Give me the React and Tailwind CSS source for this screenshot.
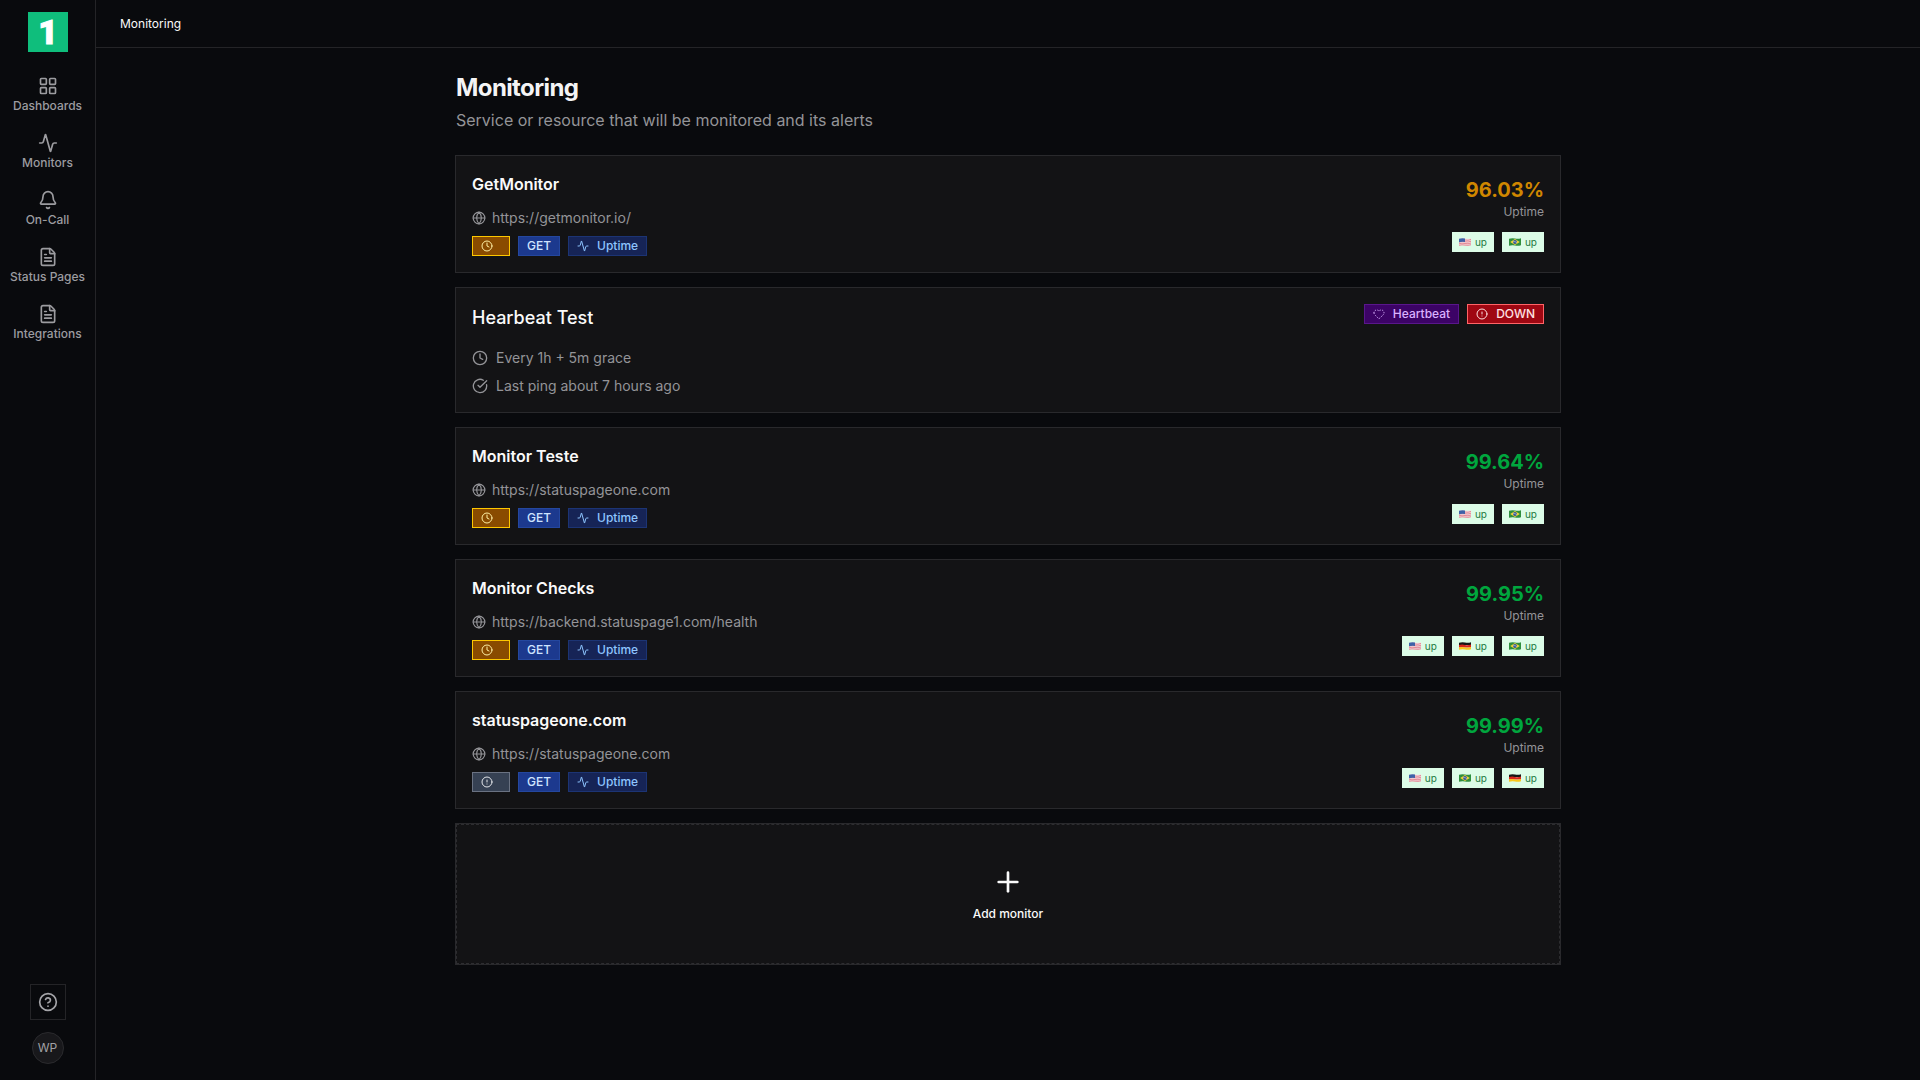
import {
  Activity,
  Bell,
  CircleAlert,
  CircleCheckBig,
  CircleQuestionMark,
  Clock,
  FileText,
  Globe,
  Heart,
  LayoutGrid,
  Plus,
} from 'lucide-react';

const NAV_ITEMS = [
  { label: 'Dashboards', icon: LayoutGrid },
  { label: 'Monitors', icon: Activity },
  { label: 'On-Call', icon: Bell },
  { label: 'Status Pages', icon: FileText },
  { label: 'Integrations', icon: FileText },
];

const GETMONITOR = {
  name: 'GetMonitor',
  url: 'https://getmonitor.io/',
  status: 'pending',
  uptime: 96.03,
  regions: ['us', 'br'],
};

const MONITORS = [
  {
    name: 'Monitor Teste',
    url: 'https://statuspageone.com',
    status: 'pending',
    uptime: 99.64,
    regions: ['us', 'br'],
  },
  {
    name: 'Monitor Checks',
    url: 'https://backend.statuspage1.com/health',
    status: 'pending',
    uptime: 99.95,
    regions: ['us', 'de', 'br'],
  },
  {
    name: 'statuspageone.com',
    url: 'https://statuspageone.com',
    status: 'unknown',
    uptime: 99.99,
    regions: ['us', 'br', 'de'],
  },
];

const BADGE_STYLES = {
  pending: 'bg-[#894b00] border-[#fdc700] text-[#fff0a5]',
  unknown: 'bg-[#364153] border-[#6a7282] text-[#e5e7eb]',
  method: 'bg-[#1c398e] border-[#24479f] text-[#cfe4ff]',
  uptime: 'bg-[#162456] border-[#1c3474] text-[#8ec5ff]',
  heartbeat: 'bg-[#3c0366] border-[#59168b] text-[#dab2ff]',
  down: 'bg-[#9f0712] border-[#ff6467] text-[#ffe2e2]',
};

function DottedHeart({ className }) {
  return <Heart className={className} strokeDasharray="1 4" />;
}

function Badge({ variant, icon: Icon, children }) {
  return (
    <span className={`inline-flex h-5 items-center gap-2 border px-2 text-xs font-medium ${BADGE_STYLES[variant]}`}>
      {Icon && <Icon className="size-3" />}
      <span>{children}</span>
    </span>
  );
}

function Flag({ code }) {
  return (
    <svg viewBox="0 0 24 16" className="h-2 w-3" role="img" aria-label={code}>
      {code === 'us' && (
        <>
          <path fill="#f4dfe3" d="M0 1.500Q6-.5 12 1T24 .5V14.500Q18 16.500 12 15T0 15.500Z" />
          <path stroke="#e0707f" strokeWidth="1.600" fill="none" d="M0 4.500Q6 2.500 12 4T24 3M0 8Q6 6 12 7.500T24 6.500M0 11.500Q6 9.500 12 11T24 10M0 14.500Q6 13 12 14.200T24 13.500" />
          <path fill="#3e62a8" d="M0 1.500Q6-.5 12 1V8Q6 7 0 8.500Z" />
        </>
      )}
      {code === 'br' && (
        <>
          <path fill="#2f8f3e" d="M0 1.500Q6-.5 12 1T24 .5V14.500Q18 16.500 12 15T0 15.500Z" />
          <path fill="#f3d13c" d="M12 2L21.500 8L12 14L2.500 8Z" />
          <circle cx="12" cy="8" r="3.800" fill="#28539c" />
          <path stroke="#fff" strokeWidth="1" fill="none" d="M8.500 7.200Q12.500 6.500 15.500 9.300" />
        </>
      )}
      {code === 'de' && (
        <>
          <path fill="#171717" d="M0 1.500Q6-.5 12 1T24 .5V6H0Z" />
          <path fill="#d8261c" d="M0 6Q6 4.500 12 5.800T24 5V11H0Z" />
          <path fill="#f9c81b" d="M0 11Q6 9.500 12 10.800T24 10V14.500Q18 16.500 12 15T0 15.500Z" />
        </>
      )}
    </svg>
  );
}

function RegionBadge({ code }) {
  return (
    <span className="inline-flex h-5 items-center gap-1 bg-[#dcfce7] px-[7px] text-[10px] text-[#1d7a3e]">
      <Flag code={code} />
      up
    </span>
  );
}

function MonitorCard({ monitor }) {
  const { name, url, status, uptime, regions } = monitor;

  return (
    <article className="flex items-center justify-between bg-[#131315] p-4 ring-1 ring-[#29292c]">
      <div>
        <h2 className="text-base font-semibold text-[#fafafa]">{name}</h2>
        <a href={url} className="mt-3 flex items-center gap-[6px] text-sm text-[#949498]">
          <Globe className="size-[14px]" />
          {url}
        </a>
        <div className="mt-2 flex gap-2">
          <Badge variant={status} icon={status === 'pending' ? Clock : CircleAlert} />
          <Badge variant="method">GET</Badge>
          <Badge variant="uptime" icon={Activity}>Uptime</Badge>
        </div>
      </div>

      <div className="flex flex-col items-end">
        <p className={`text-xl font-bold ${uptime >= 99 ? 'text-[#00a63e]' : 'text-[#d08700]'}`}>
          {uptime.toFixed(2)}%
        </p>
        <p className="text-xs text-[#949498]">Uptime</p>
        <div className="mt-3 flex gap-2">
          {regions.map((code) => (
            <RegionBadge key={code} code={code} />
          ))}
        </div>
      </div>
    </article>
  );
}

function HeartbeatCard() {
  return (
    <article className="bg-[#131315] p-4 ring-1 ring-[#29292c]">
      <div className="flex items-start justify-between">
        <h2 className="text-lg font-medium text-[#fafafa]">Hearbeat Test</h2>
        <div className="flex gap-2">
          <Badge variant="heartbeat" icon={DottedHeart}>Heartbeat</Badge>
          <Badge variant="down" icon={CircleAlert}>DOWN</Badge>
        </div>
      </div>
      <div className="mt-4 flex flex-col gap-2 text-sm text-[#949498]">
        <p className="flex items-center gap-2">
          <Clock className="size-4" />
          Every 1h + 5m grace
        </p>
        <p className="flex items-center gap-2">
          <CircleCheckBig className="size-4" />
          Last ping about 7 hours ago
        </p>
      </div>
    </article>
  );
}

function Sidebar() {
  return (
    <aside className="flex w-24 shrink-0 flex-col items-center border-r border-[#242427] pt-3 pb-4">
      <a href="#home" aria-label="Home">
        <svg viewBox="0 0 40 40" className="size-10">
          <rect width="40" height="40" fill="#0fbe7c" />
          <text x="20" y="32" textAnchor="middle" fill="#fff" stroke="#fff" strokeWidth="1" fontFamily="Roboto, sans-serif" fontSize="34" fontWeight="900">1</text>
        </svg>
      </a>

      <nav className="mt-4 flex flex-col gap-[3px]">
        {NAV_ITEMS.map(({ label, icon: Icon }) => (
          <a key={label} href={`#${label}`} className="flex flex-col items-center gap-[2px] py-2 text-xs font-medium text-[#9c9ca0]">
            <Icon className="size-5" />
            {label}
          </a>
        ))}
      </nav>

      <div className="mt-auto flex flex-col items-center gap-3">
        <button aria-label="Help" className="flex size-9 items-center justify-center border border-[#242427] text-[#a5a5a9]">
          <CircleQuestionMark className="size-5" />
        </button>
        <button className="flex size-8 items-center justify-center rounded-full border border-[#2a2a2d] bg-[#18181b] text-xs text-[#a1a1a5]">
          WP
        </button>
      </div>
    </aside>
  );
}

export default function App() {
  return (
    <div className="flex min-h-screen bg-[#090a0d] font-['Inter',sans-serif]">
      <Sidebar />

      <div className="flex min-w-0 flex-1 flex-col">
        <header className="flex h-12 items-center border-b border-[#242427] px-6 text-xs text-[#fafafa]">
          Monitoring
        </header>

        <main className="mx-auto w-full max-w-6xl p-6">
          <h1 className="text-2xl font-bold tracking-tight text-[#f4f4f5]">Monitoring</h1>
          <p className="mt-1 text-base text-[#949498]">
            Service or resource that will be monitored and its alerts
          </p>

          <div className="mt-6 flex flex-col gap-4">
            <MonitorCard monitor={GETMONITOR} />
            <HeartbeatCard />
            {MONITORS.map((monitor) => (
              <MonitorCard key={monitor.name} monitor={monitor} />
            ))}

            {/* Add monitor */}
            <button className="flex flex-col items-center gap-2 border border-dashed border-[#2d2d30] bg-[#131315] py-[41px] text-xs font-medium text-[#fafafa] ring-1 ring-[#29292c]">
              <Plus className="size-8" />
              Add monitor
            </button>
          </div>
        </main>
      </div>
    </div>
  );
}
